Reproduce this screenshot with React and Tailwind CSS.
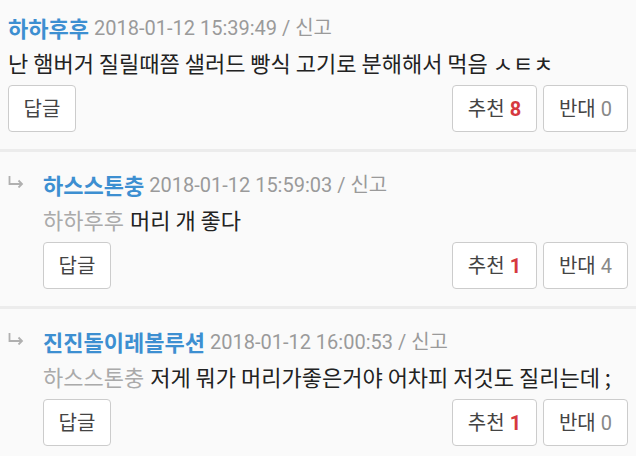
const font = { fontFamily: "Roboto, 'Noto Sans CJK KR', sans-serif" };
const kr = { fontFamily: "'Noto Sans CJK KR', Roboto, sans-serif" };

const comments = [
  {
    name: "하하후후",
    date: "2018-01-12 15:39:49",
    body: "난 햄버거 질릴때쯤 샐러드 빵식 고기로 분해해서 먹음 ㅅㅌㅊ",
    up: 8,
    down: 0,
  },
  {
    reply: true,
    name: "하스스톤충",
    date: "2018-01-12 15:59:03",
    to: "하하후후",
    body: "머리 개 좋다",
    up: 1,
    down: 4,
  },
  {
    reply: true,
    name: "진진돌이레볼루션",
    date: "2018-01-12 16:00:53",
    to: "하스스톤충",
    body: "저게 뭐가 머리가좋은거야 어차피 저것도 질리는데 ;",
    up: 1,
    down: 0,
  },
];

// reply marker: down-then-right arrow
function ReplyArrow() {
  return (
    <svg width="16" height="12" viewBox="0 0 16 12" fill="none" stroke="#b0b0b0" strokeWidth="1.8">
      <path d="M1.5 0 V8 H14" />
      <path d="M10.5 4.5 L14 8 L10.5 11.5" />
    </svg>
  );
}

function Btn({ children, className = "" }) {
  return (
    <button
      className={`h-[47px] rounded-[4px] border border-[#cccccc] bg-white text-[20px] text-[#444] flex items-center justify-center ${className}`}
    >
      {children}
    </button>
  );
}

function Comment({ c, first, last }) {
  return (
    <div
      className={`flex px-2 ${first ? "pt-[10px]" : "pt-[15px]"} ${
        last ? "pb-4" : "pb-[17px] border-b-[3px] border-[#ececec]"
      }`}
    >
      {c.reply && (
        <div className="w-[35px] shrink-0 h-[35px] flex items-center pb-[6px]">
          <ReplyArrow />
        </div>
      )}
      <div className="flex-1 min-w-0">
        <div className="h-[35px] flex items-center whitespace-nowrap">
          <span className="font-bold text-[22px] text-[#3d8fd1]" style={kr}>
            {c.name}
          </span>
          <span className="ml-[5px] text-[20px] text-[#9a9a9a]">
            {c.date} / 신고
          </span>
        </div>
        <div className="h-[35px] flex items-center text-[22px] whitespace-nowrap text-[#222]" style={kr}>
          {c.to && <span className="text-[#aaaaaa] mr-[6px]">{c.to}</span>}
          <span>{c.body}</span>
        </div>
        <div className="mt-[5px] flex">
          <Btn className="w-[68px]">답글</Btn>
          <div className="ml-auto flex gap-[6px]">
            <Btn className="w-[85px]">
              추천<span className="ml-[5px] font-bold text-[#d6393f]">{c.up}</span>
            </Btn>
            <Btn className="w-[85px]">
              반대<span className="ml-[5px] text-[#888]">{c.down}</span>
            </Btn>
          </div>
        </div>
      </div>
    </div>
  );
}

export default function App() {
  return (
    <div className="w-[636px] h-[456px] overflow-hidden bg-[#fafafa]" style={font}>
      {comments.map((c, i) => (
        <Comment key={i} c={c} first={i === 0} last={i === comments.length - 1} />
      ))}
    </div>
  );
}
